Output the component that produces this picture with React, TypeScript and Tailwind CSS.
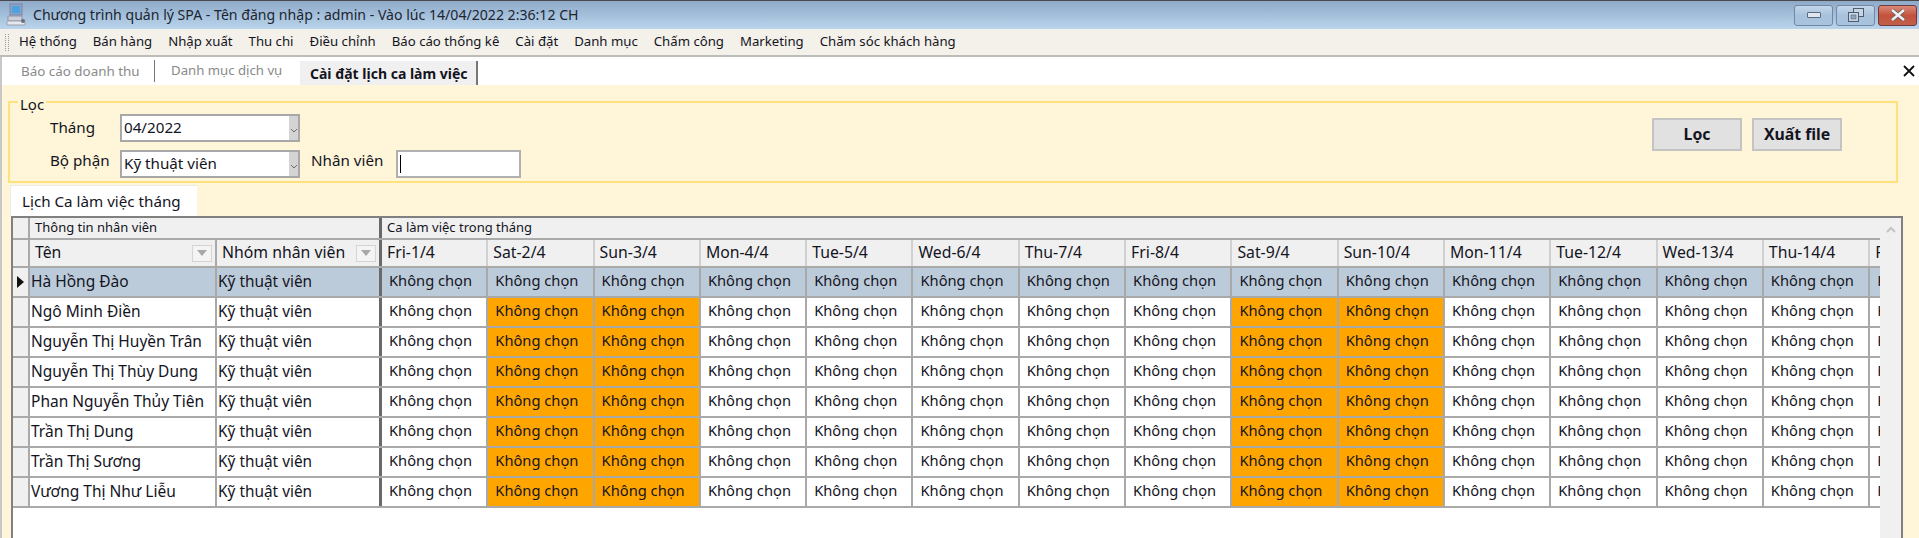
const menuItems = ['Hệ thống', 'Bán hàng', 'Nhập xuất', 'Thu chi', 'Điều chỉnh', 'Báo cáo thống kê', 'Cài đặt', 'Danh mục', 'Chấm công', 'Marketing', 'Chăm sóc khách hàng'];

const employees = ['Hà Hồng Đào', 'Ngô Minh Điền', 'Nguyễn Thị Huyền Trân', 'Nguyễn Thị Thùy Dung', 'Phan Nguyễn Thủy Tiên', 'Trần Thị Dung', 'Trần Thị Sương', 'Vương Thị Như Liễu'];

const weekdays = ['Fri', 'Sat', 'Sun', 'Mon', 'Tue', 'Wed', 'Thu'];
const days = Array.from({ length: 15 }, (_, i) => {
  const name = weekdays[i % 7];
  return { label: `${name}-${i + 1}/4`, weekend: name === 'Sat' || name === 'Sun' };
});

function AppIcon() {
  return (
    <svg width="22" height="24" viewBox="0 0 22 24" className="shrink-0">
      <rect x="4" y="1" width="12" height="11" fill="#8fa3c4" stroke="#7c83a8" />
      <rect x="6" y="3" width="8" height="7" fill="#4aa3e0" />
      <rect x="2" y="13" width="14" height="5" fill="#c9ced8" stroke="#8f95a5" />
      <rect x="1" y="18" width="18" height="4" rx="1" fill="#e6e8ee" stroke="#9aa0ae" />
      <circle cx="17" cy="18" r="2" fill="#6b6f7c" />
    </svg>
  );
}

function WindowButton({ kind }: { kind: 'min' | 'restore' | 'close' }) {
  const tone =
    kind === 'close'
      ? 'border-[#6e3a3f] bg-gradient-to-b from-[#d98a78] via-[#c4523c] to-[#c0604c]'
      : 'border-[#6f88a5] bg-gradient-to-b from-[#c3d6ea] via-[#a9c2dc] to-[#a8c3de]';
  return (
    <div className={`flex h-[21px] w-[39px] items-center justify-center rounded-[3px] border ${tone}`}>
      {kind === 'min' && <div className="h-[6px] w-[14px] rounded-[1px] border border-[#566a80] bg-[#dfe6ee]" />}
      {kind === 'restore' && (
        <svg width="16" height="14" viewBox="0 0 16 14">
          <rect x="5.5" y="0.5" width="10" height="8" fill="#c5d5e6" stroke="#4d5b6b" />
          <rect x="0.5" y="4.5" width="10" height="9" fill="#c5d5e6" stroke="#4d5b6b" />
          <rect x="3" y="7" width="5" height="4" fill="#8fa6bf" stroke="#4d5b6b" strokeWidth="0.5" />
        </svg>
      )}
      {kind === 'close' && (
        <svg width="16" height="12" viewBox="0 0 16 12">
          <path d="M2 1 L14 11 M14 1 L2 11" stroke="#5a5a5a" strokeWidth="4" />
          <path d="M2 1 L14 11 M14 1 L2 11" stroke="#f0f0f0" strokeWidth="2.6" />
        </svg>
      )}
    </div>
  );
}

function Combo({ value }: { value: string }) {
  return (
    <div className="flex h-[28px] w-[180px] items-center border-2 border-[#a8a8a8] bg-white text-[15.2px]">
      <span className="flex-1 pb-[2px] pl-[2px]">{value}</span>
      <div className="flex h-full w-[9px] items-center justify-center bg-[#d4d4d4]">
        <svg width="8" height="6" viewBox="0 0 8 6" className="mt-[6px]">
          <path d="M1 1 L4 4 L7 1" fill="none" stroke="#6b6b6b" />
        </svg>
      </div>
    </div>
  );
}

function FilterBtn({ className }: { className: string }) {
  return (
    <div className={`flex h-[17px] w-[20px] shrink-0 items-center justify-center border border-[#d4d4d4] bg-[#f4f4f4] ${className}`}>
      <svg width="10" height="6" viewBox="0 0 10 6">
        <path d="M0 0 H10 L5 6 Z" fill="#a8a8a8" />
      </svg>
    </div>
  );
}

function GridRow({ name, selected }: { name: string; selected: boolean }) {
  const base = selected ? 'bg-[#bccbda]' : 'bg-white';
  return (
    <div className="flex h-[30px] border-b-2 border-[#a9a9a9]">
      <div className="flex w-[17px] shrink-0 items-center justify-center border-r-2 border-[#a9a9a9] bg-[#f0f0f0]">
        {selected && (
          <svg width="7" height="12" viewBox="0 0 7 12">
            <path d="M0 0 L7 6 L0 12 Z" fill="#111" />
          </svg>
        )}
      </div>
      <div className={`flex w-[187px] shrink-0 items-center whitespace-nowrap border-r-2 border-[#a9a9a9] pl-[1px] text-[15.5px] ${base}`}>{name}</div>
      <div className={`flex w-[165px] shrink-0 items-center border-r-[3px] border-[#696969] pl-[1px] text-[15.4px] ${base}`}>Kỹ thuật viên</div>
      {days.map((d) => (
        <div
          key={d.label}
          className={`flex w-[106.3px] shrink-0 items-center overflow-hidden whitespace-nowrap border-r-2 border-[#a9a9a9] pb-[3px] pl-[7px] text-[14.7px] ${
            selected ? 'bg-[#bccbda]' : d.weekend ? 'bg-[#ffa500]' : 'bg-white'
          }`}
        >
          Không chọn
        </div>
      ))}
    </div>
  );
}

export default function App() {
  return (
    <div
      className="flex h-screen w-full flex-col overflow-hidden bg-white text-[#14141e]"
      style={{ fontFamily: '"Noto Sans", sans-serif' }}
    >
      {/* title bar */}
      <div className="flex h-[29px] shrink-0 items-center border-t border-[#4a4a4a] bg-gradient-to-b from-[#8eaac8] to-[#bad4ec] pl-[6px] pr-[2px]">
        <AppIcon />
        <span className="ml-[5px] flex-1 text-[14.1px] text-[#1c2530]">Chương trình quản lý SPA - Tên đăng nhập : admin - Vào lúc 14/04/2022 2:36:12 CH</span>
        <div className="flex gap-[3px]">
          <WindowButton kind="min" />
          <WindowButton kind="restore" />
          <WindowButton kind="close" />
        </div>
      </div>

      {/* menu */}
      <div className="flex h-[28px] shrink-0 items-center border-b-2 border-[#bdbdb8] bg-[#f3f1ea] pl-[5px] text-[13.2px]">
        <div className="mr-[10px] h-[17px] w-[4px] border-x border-dotted border-[#9a9a9a]" />
        <div className="flex gap-[16px]">
          {menuItems.map((m) => (
            <span key={m}>{m}</span>
          ))}
        </div>
      </div>

      {/* open forms */}
      <div className="flex h-[28px] shrink-0 items-end border-l-2 border-[#c8c8c8] pl-[19px] text-[13.2px]">
        <div className="mb-[3px] flex h-[22px] w-[134px] items-center whitespace-nowrap border-r border-[#777] text-[13.4px] text-[#8a8a8a]">Báo cáo doanh thu</div>
        <div className="mb-[3px] ml-[16px] flex h-[22px] w-[129px] items-center text-[#8a8a8a]">Danh mục dịch vụ</div>
        <div className="flex h-[24px] w-[178px] items-center whitespace-nowrap border-r-2 border-[#777] bg-[#f0f0f0] pl-[10px] text-[14px] font-bold">Cài đặt lịch ca làm việc</div>
        <div className="ml-auto mr-[4px] self-center">
          <svg width="12" height="12" viewBox="0 0 12 12">
            <path d="M1 1 L11 11 M11 1 L1 11" stroke="#111" strokeWidth="1.8" />
          </svg>
        </div>
      </div>

      {/* content */}
      <div className="flex min-h-0 flex-1 flex-col border-l-2 border-[#c8c8c8] bg-[#fff6da] pl-[6px] pr-[16px] text-[15.2px]">
        <fieldset className="mr-[5px] mt-[7px] h-[91px] shrink-0 border-2 border-[#ffe27f]">
          <legend className="ml-[8px] px-[2px] pt-[4px] text-[15px] leading-[16px]">Lọc</legend>
          <div className="flex justify-between pr-[54px]">
            <div className="flex flex-col gap-[7px] pl-[40px] pt-[2px]">
              <div className="flex items-center">
                <span className="w-[70px] pb-[2px]">Tháng</span>
                <Combo value="04/2022" />
              </div>
              <div className="flex items-center">
                <span className="w-[70px] whitespace-nowrap pb-[8px]">Bộ phận</span>
                <Combo value="Kỹ thuật viên" />
                <span className="ml-[11px] w-[85px] whitespace-nowrap pb-[8px]">Nhân viên</span>
                <div className="flex h-[28px] w-[125px] items-center border-2 border-[#b0b0b0] bg-white pl-[2px]">
                  <div className="h-[18px] w-px bg-black" />
                </div>
              </div>
            </div>
            <div className="flex gap-[10px] pt-[6px]">
              <button className="h-[33px] w-[90px] border-2 border-[#c4c4c4] bg-[#e1e1e1] text-[15.8px] font-bold">Lọc</button>
              <button className="h-[33px] w-[90px] border-2 border-[#c4c4c4] bg-[#e1e1e1] text-[15.8px] font-bold">Xuất file</button>
            </div>
          </div>
        </fieldset>

        <div className="flex h-[33px] shrink-0 items-end pl-[2px] pt-[2px]">
          <div className="flex h-[31px] w-[187px] items-center whitespace-nowrap border-l border-t border-[#ececec] bg-white pl-[11px]">Lịch Ca làm việc tháng</div>
        </div>

        <div className="ml-[3px] flex min-h-0 flex-1 border-l-2 border-t-2 border-r-2 border-[#808080] bg-white">
          <div className="min-w-0 flex-1 overflow-hidden">
            {/* group headers */}
            <div className="flex h-[22px] border-b-2 border-[#a9a9a9] bg-[#f0f0f0] text-[13px]">
              <div className="w-[17px] shrink-0 border-r-2 border-[#a9a9a9]" />
              <div className="flex w-[352px] shrink-0 items-center border-r-[3px] border-[#696969] pl-[5px]">Thông tin nhân viên</div>
              <div className="flex items-center whitespace-nowrap pl-[5px]">Ca làm việc trong tháng</div>
            </div>
            {/* column headers */}
            <div className="flex h-[28px] border-b-2 border-[#a9a9a9] bg-[#f0f0f0] text-[15.8px]">
              <div className="w-[17px] shrink-0 border-r-2 border-[#a9a9a9]" />
              <div className="flex w-[187px] shrink-0 items-center border-r-2 border-[#a9a9a9] pl-[5px]">
                <span className="flex-1">Tên</span>
                <FilterBtn className="mr-[3px]" />
              </div>
              <div className="flex w-[165px] shrink-0 items-center border-r-[3px] border-[#696969] pl-[5px]">
                <span className="flex-1 whitespace-nowrap">Nhóm nhân viên</span>
                <FilterBtn className="mr-[3px]" />
              </div>
              {days.map((d) => (
                <div key={d.label} className="flex w-[106.3px] shrink-0 items-center overflow-hidden whitespace-nowrap border-r-2 border-[#d0d0d0] pl-[5px]">
                  {d.label}
                </div>
              ))}
            </div>
            {employees.map((name, i) => (
              <GridRow key={name} name={name} selected={i === 0} />
            ))}
          </div>
          <div className="flex w-[21px] shrink-0 justify-center bg-[#f0f0f0] pt-[8px]">
            <svg width="10" height="7" viewBox="0 0 10 7">
              <path d="M1 6 L5 2 L9 6" fill="none" stroke="#c4c4c4" strokeWidth="2" />
            </svg>
          </div>
        </div>
      </div>
    </div>
  );
}
